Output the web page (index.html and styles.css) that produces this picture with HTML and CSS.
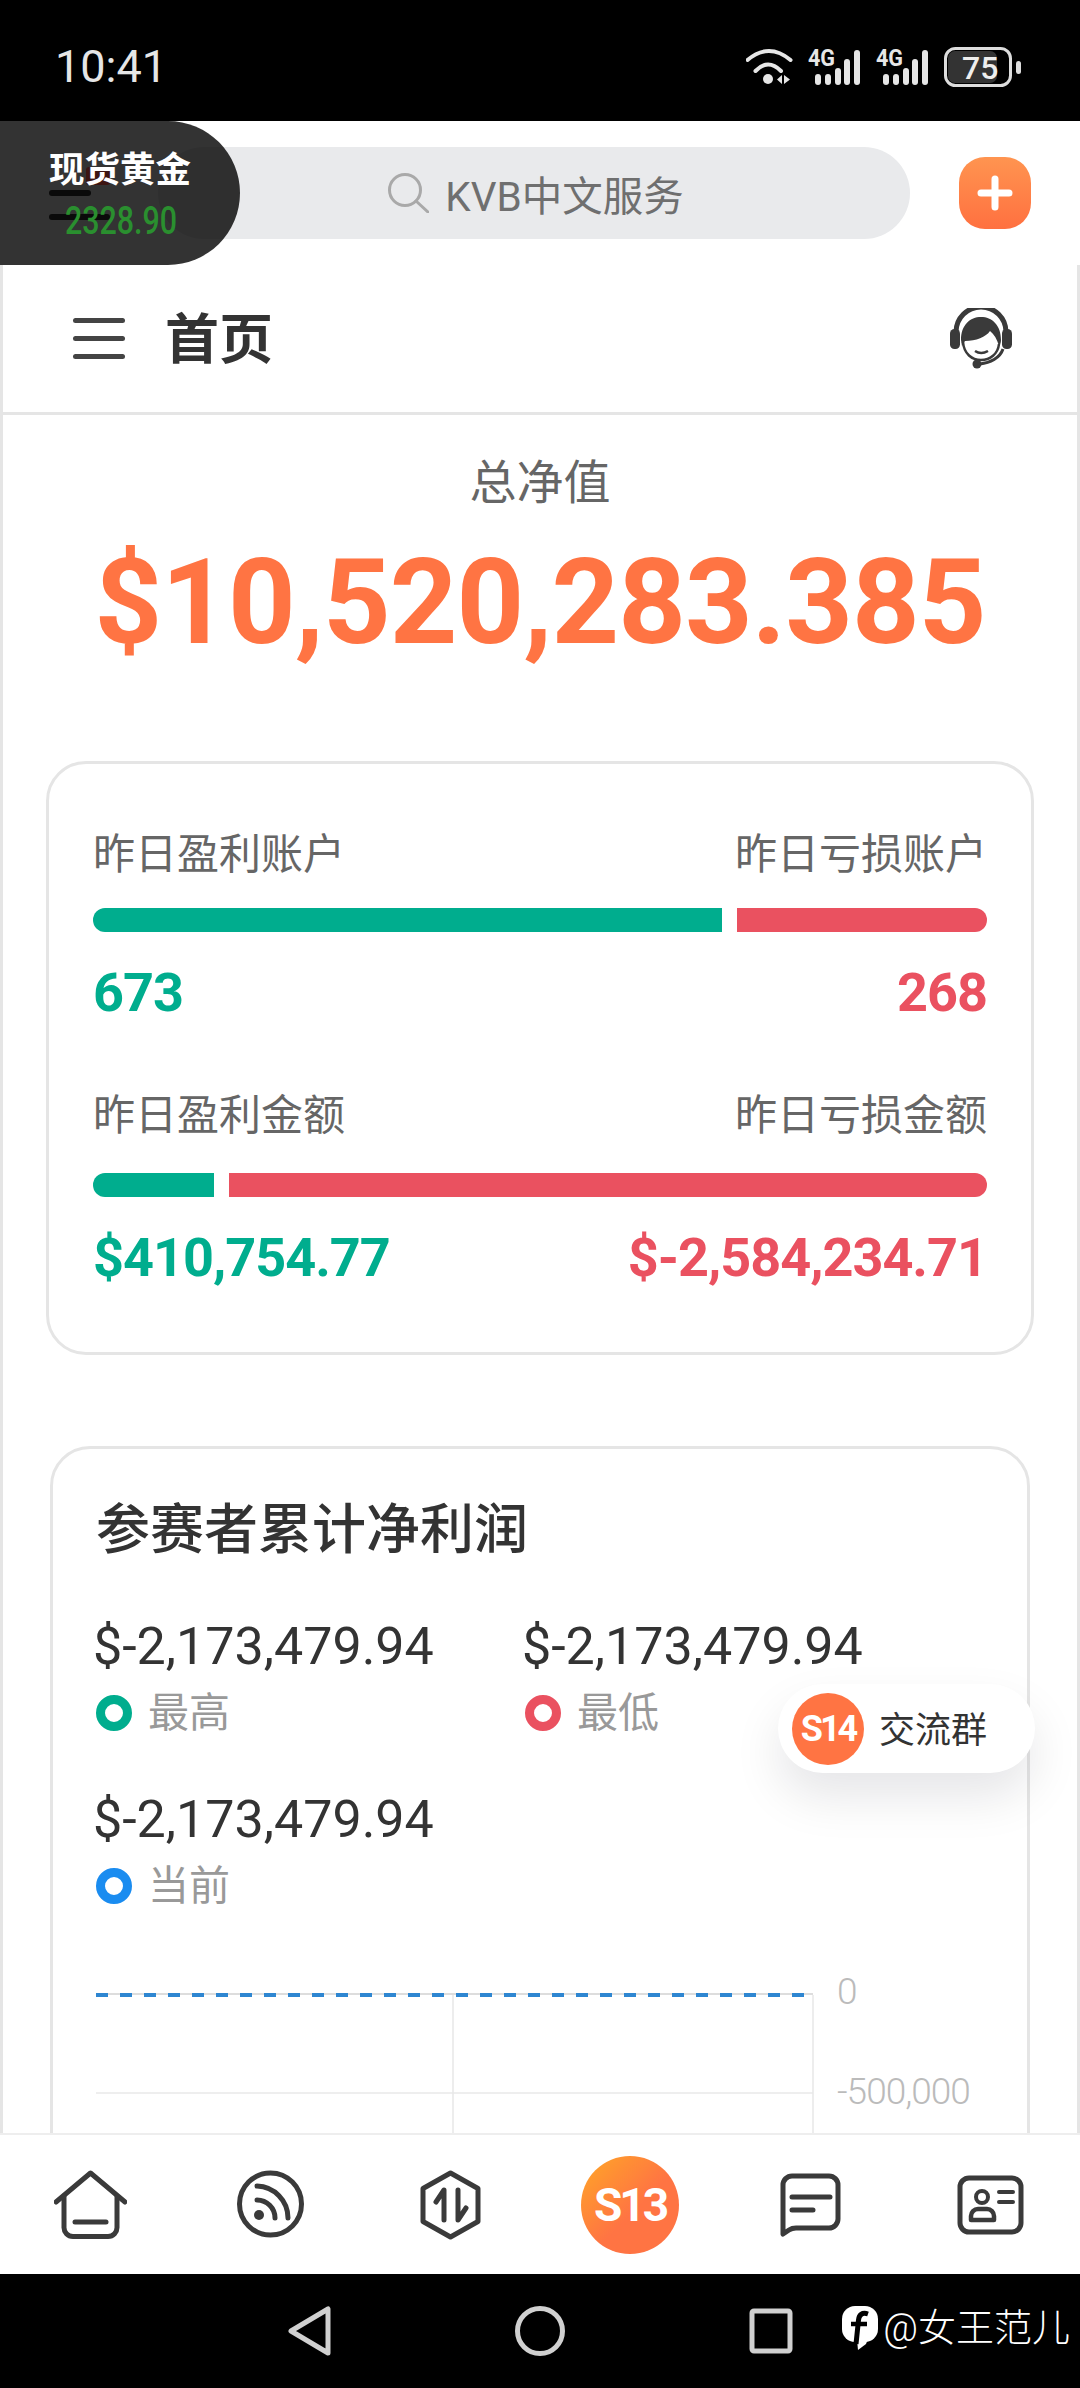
FILE: index.html
```html
<!DOCTYPE html>
<html lang="zh">
<head>
  <meta charset="UTF-8" />
  <meta name="viewport" content="width=device-width, initial-scale=1" />
  <title>首页</title>
  <link rel="stylesheet" href="styles.css">
</head>
<body>
  <div class="screen">
    <div class="status-bar">
      <span class="hora">10:41</span>
      <div class="status-iconos">
        <svg width="47" height="38" viewBox="0 0 47 38" fill="none" stroke="#e6e6e6" stroke-width="4" stroke-linecap="round">
          <path d="M1.5 12Q23-6 44.500 12" />
          <path d="M9.500 23Q22 10 35 23" />
          <circle cx="22" cy="31" r="5" fill="#e6e6e6" stroke="none" />
          <path d="M36 27v9l-5-4.500zM38 27v9l6-4.500z" fill="#e6e6e6" stroke="none" />
        </svg>
        <svg class="senal" width="53" height="52" viewBox="0 -6 53 52">
          <text x="0" y="19" class="senal-texto" textLength="27" lengthAdjust="spacingAndGlyphs">4G</text>
          <rect x="7" y="27" width="6" height="11" rx="3" />
          <rect x="17" y="27" width="6" height="11" rx="3" />
          <rect x="27" y="21" width="6" height="17" rx="3" />
          <rect x="36" y="12" width="6" height="26" rx="3" />
          <rect x="46" y="3" width="6" height="35" rx="3" />
        </svg>
        <svg class="senal" width="53" height="52" viewBox="0 -6 53 52">
          <text x="0" y="19" class="senal-texto" textLength="27" lengthAdjust="spacingAndGlyphs">4G</text>
          <rect x="7" y="27" width="6" height="11" rx="3" />
          <rect x="17" y="27" width="6" height="11" rx="3" />
          <rect x="27" y="21" width="6" height="17" rx="3" />
          <rect x="36" y="12" width="6" height="26" rx="3" />
          <rect x="46" y="3" width="6" height="35" rx="3" />
        </svg>
        <svg width="77" height="40" viewBox="0 0 77 40">
          <rect x="4" y="4" width="49" height="32" rx="7" fill="#333" />
          <rect x="1.500" y="1.500" width="65" height="37" rx="10" fill="none" stroke="#ddd" stroke-width="3" />
          <text x="18" y="32" class="bateria-texto">75</text>
          <rect x="72" y="14" width="5" height="13" rx="2.500" fill="#ddd" />
        </svg>
      </div>
    </div>

    <div class="buscador-fila">
      <div class="buscador">
        <svg width="41" height="40" viewBox="0 0 41 40" fill="none" stroke="#a9a9a9" stroke-width="3" stroke-linecap="round">
          <circle cx="17" cy="17" r="15.500" />
          <path d="M28 28l12 11" />
        </svg>
        <span>KVB中文服务</span>
      </div>
      <div class="boton-mas">
        <svg width="36" height="36" viewBox="0 0 36 36" stroke="#fff" stroke-width="7" stroke-linecap="round">
          <path d="M18 4v28M4 18h28" />
        </svg>
      </div>
    </div>

    <!-- Precio flotante -->
    <div class="precio-flotante">
      <i class="mancha mancha-roja"></i>
      <i class="mancha mancha-1"></i>
      <i class="mancha mancha-2"></i>
      <span class="precio-nombre">现货黄金</span>
      <span class="precio-valor">2328.90</span>
    </div>

    <div class="cabecera">
      <div class="menu"><span></span><span></span><span></span></div>
      <h1>首页</h1>
      <svg class="soporte" width="62" height="62" viewBox="0 0 62 62" fill="#3a3a3a">
        <path d="M6 24A25 25 0 0 1 56 24" fill="none" stroke="#3a3a3a" stroke-width="5" />
        <rect x="0" y="21" width="10" height="20" rx="4.500" />
        <rect x="52" y="21" width="10" height="20" rx="4.500" />
        <path d="M11 32C11 17 20 9 31 9S51 17 51 32C51 35 50 37 49 38 47 31 44 26 40 23 36 29 26 33 15 33L12 38Z" />
        <path d="M13 34C14 46 22 52 31 52S48 46 49 36" fill="none" stroke="#3a3a3a" stroke-width="2.500" />
        <path d="M25 43Q31 47 38 43" fill="none" stroke="#3a3a3a" stroke-width="2.500" />
        <path d="M53 41C50 50 40 55 30 56" fill="none" stroke="#3a3a3a" stroke-width="3" />
        <circle cx="27" cy="56" r="4.500" />
      </svg>
    </div>

    <div class="contenido">
      <div class="saldo">
        <div class="saldo-titulo">总净值</div>
        <div class="saldo-monto">$10,520,283.385</div>
      </div>

      <div class="tarjeta tarjeta-ayer">
        <div class="fila">
          <span>昨日盈利账户</span>
          <span>昨日亏损账户</span>
        </div>
        <div class="barra">
          <div class="barra-verde" style="flex: 673"></div>
          <div class="barra-roja" style="flex: 268"></div>
        </div>
        <div class="fila fila-numeros">
          <span class="verde">673</span>
          <span class="rojo">268</span>
        </div>
        <div class="fila fila-segunda">
          <span>昨日盈利金额</span>
          <span>昨日亏损金额</span>
        </div>
        <div class="barra">
          <div class="barra-verde" style="flex: 410755"></div>
          <div class="barra-roja" style="flex: 2584235"></div>
        </div>
        <div class="fila fila-numeros">
          <span class="verde">$410,754.77</span>
          <span class="rojo">$-2,584,234.71</span>
        </div>
      </div>

      <div class="tarjeta tarjeta-neto">
        <h2>参赛者累计净利润</h2>
        <div class="datos">
          <div class="dato">
            <div class="dato-valor">$-2,173,479.94</div>
            <div class="dato-nombre"><i class="aro aro-verde"></i>最高</div>
          </div>
          <div class="dato">
            <div class="dato-valor">$-2,173,479.94</div>
            <div class="dato-nombre"><i class="aro aro-rojo"></i>最低</div>
          </div>
          <div class="dato">
            <div class="dato-valor">$-2,173,479.94</div>
            <div class="dato-nombre"><i class="aro aro-azul"></i>当前</div>
          </div>
        </div>
        <svg class="grafico" width="880" height="320" viewBox="0 0 880 320" fill="none">
          <path d="M0 33H717" stroke="#ddd" stroke-width="2" />
          <path d="M0 34H711" stroke="#2e86d1" stroke-width="4" stroke-dasharray="12 12" />
          <path d="M0 132H717" stroke="#eee" stroke-width="2" />
          <path d="M357 34V320M717 34V320" stroke="#e8e8e8" stroke-width="1.500" />
          <text x="741" y="43" class="grafico-texto">0</text>
          <text x="741" y="143" class="grafico-texto">-500,000</text>
        </svg>
      </div>

      <div class="flotante-grupo">
        <span class="logo-s14">S14</span>
        <span class="flotante-texto">交流群</span>
      </div>
    </div>

    <nav class="nav">
      <svg width="73" height="69" viewBox="0 0 73 69" fill="none" stroke="#3a3a3a" stroke-width="5" stroke-linecap="round" stroke-linejoin="round">
        <path d="M2 32L36.500 3 71 32" />
        <path d="M10 26V57A9 9 0 0 0 19 66.500H54A9 9 0 0 0 63 57V26" />
        <path d="M21 52H52" />
      </svg>
      <svg width="67" height="69" viewBox="0 0 67 69" fill="none" stroke="#3a3a3a" stroke-width="5" stroke-linecap="round">
        <circle cx="33.500" cy="34" r="31" />
        <circle cx="22" cy="45" r="5" fill="#3a3a3a" stroke="none" />
        <path d="M20 30A18 18 0 0 1 38 48" />
        <path d="M20 16A32 32 0 0 1 51 48" />
      </svg>
      <svg width="63" height="70" viewBox="0 0 63 70" fill="none" stroke="#3a3a3a" stroke-width="5" stroke-linecap="round" stroke-linejoin="round">
        <path d="M31.500 3L59 18.500V51.500L31.500 67 4 51.500V18.500Z" />
        <path d="M25 50V20L17 32" />
        <path d="M39 20V50L47 38" />
      </svg>
      <span class="logo-s13">S13</span>
      <svg width="61" height="64" viewBox="0 0 61 64" fill="none" stroke="#3a3a3a" stroke-width="5" stroke-linecap="round" stroke-linejoin="round">
        <path d="M3 61V12A9 9 0 0 1 12 3H49A9 9 0 0 1 58 12V46A9 9 0 0 1 49 55H16Q12 55 9 57Z" />
        <path d="M12 24H50M12 37H33" />
      </svg>
      <svg width="67" height="60" viewBox="0 0 67 60" fill="none" stroke="#3a3a3a" stroke-width="5" stroke-linecap="round" stroke-linejoin="round">
        <rect x="3" y="3" width="61" height="54" rx="9" />
        <circle cx="25" cy="22" r="6" stroke-width="4" />
        <path d="M14 45V41A7 7 0 0 1 21 34H30A7 7 0 0 1 37 41V45Z" stroke-width="4.500" />
        <path d="M42 17H56M42 27H56" stroke-width="4" />
      </svg>
    </nav>

    <div class="sistema">
      <svg width="43" height="50" viewBox="0 0 43 50" fill="none" stroke="#d0d0d0" stroke-width="5" stroke-linejoin="round">
        <path d="M3 25L40 3V47Z" />
      </svg>
      <svg width="50" height="50" viewBox="0 0 50 50" fill="none" stroke="#d0d0d0" stroke-width="5">
        <circle cx="25" cy="25" r="22.500" />
      </svg>
      <svg width="44" height="46" viewBox="0 0 44 46" fill="none" stroke="#d0d0d0" stroke-width="5" stroke-linejoin="round">
        <rect x="3" y="3" width="38" height="40" rx="2" />
      </svg>
      <div class="marca">
        <svg width="36" height="44" viewBox="0 0 36 44">
          <rect x="0" y="0" width="36" height="36" rx="13" fill="#fff" />
          <path d="M15 34L16 44 24 38 26 33Z" fill="#fff" />
          <path d="M26 8C20 6 17 9 16.500 14L14 38" fill="none" stroke="#000" stroke-width="5" />
          <path d="M9 18H25" stroke="#000" stroke-width="4.500" />
        </svg>
        <span>@女王范儿</span>
      </div>
    </div>
  </div>
</body>
</html>
```
FILE: styles.css
```css
* {
  box-sizing: border-box;
}

body {
  margin: 0;
  padding: 0;
  background: #fff;
  color: #333;
  font-family: Roboto, "Noto Sans CJK SC", sans-serif;
}

.screen {
  position: relative;
  width: 1080px;
  height: 2388px;
  overflow: hidden;
  display: flex;
  flex-direction: column;
}

/* barra de estado */
.status-bar {
  flex: none;
  height: 121px;
  background: #000;
  display: flex;
  align-items: center;
  padding: 12px 59px 0 55px;
  color: #e6e6e6;
}

.hora {
  font-size: 45px;
  line-height: 1;
}

.status-iconos {
  margin-left: auto;
  display: flex;
  align-items: center;
  gap: 15px;
}

.senal {
  fill: #e6e6e6;
}

.senal-texto {
  font-size: 23px;
  font-weight: 700;
}

.bateria-texto {
  fill: #eee;
  font-size: 32px;
  font-weight: 500;
}

/* buscador */
.buscador-fila {
  flex: none;
  height: 144px;
  display: flex;
  align-items: center;
  padding: 0 49px 0 158px;
}

.buscador {
  width: 752px;
  height: 92px;
  padding-left: 4px;
  border-radius: 46px;
  background: #e9eaec;
  display: flex;
  align-items: center;
  justify-content: center;
  gap: 16px;
  font-size: 40.500px;
  color: #6f6f6f;
}

.boton-mas {
  width: 72px;
  height: 72px;
  margin-left: 49px;
  border-radius: 26px;
  background: linear-gradient(180deg, #ff9450, #ff7040);
  display: flex;
  align-items: center;
  justify-content: center;
}

.precio-flotante {
  position: absolute;
  top: 121px;
  left: 0;
  width: 240px;
  height: 144px;
  padding: 26px 0 0 49px;
  border-radius: 0 72px 72px 0;
  background: rgba(0, 0, 0, 0.8);
  display: flex;
  flex-direction: column;
}

.precio-nombre {
  position: relative;
  font-size: 35.500px;
  line-height: 46px;
  font-weight: 700;
  color: #fff;
}

.precio-valor {
  position: relative;
  align-self: flex-start;
  margin: 6px 0 0 16px;
  font-size: 38px;
  line-height: 44px;
  font-weight: 500;
  color: #2a8f2f;
  transform: scaleX(0.8);
  transform-origin: left center;
}

.mancha {
  position: absolute;
  left: 49px;
  height: 6px;
  border-radius: 3px;
  background: #0a0a0a;
}

.mancha-1 {
  top: 69px;
  width: 42px;
}

.mancha-2 {
  top: 93px;
  width: 61px;
}

.mancha-roja {
  top: 46px;
  left: 86px;
  width: 24px;
  height: 18px;
  background: #3d1512;
}

/* cabecera */
.cabecera {
  flex: none;
  height: 150px;
  display: flex;
  align-items: center;
  padding: 0 65px 0 70px;
  border: 3px solid #e5e5e5;
  border-top: none;
}

.menu {
  display: flex;
  flex-direction: column;
  gap: 13px;
}

.menu span {
  width: 52px;
  height: 5px;
  border-radius: 2.500px;
  background: #444;
}

.cabecera h1 {
  margin: 0 0 6px 40px;
  font-size: 54px;
  font-weight: 700;
  color: #333;
}

.soporte {
  margin-left: auto;
}

/* contenido */
.contenido {
  position: relative;
  flex: 1;
  min-height: 0;
  overflow: hidden;
  border-left: 3px solid #e5e5e5;
  border-right: 3px solid #e5e5e5;
}

.saldo {
  padding-top: 38px;
  text-align: center;
}

.saldo-titulo {
  font-size: 47px;
  line-height: 60px;
  color: #666;
}

.saldo-monto {
  margin-top: 25px;
  margin-bottom: -3px;
  font-size: 118px;
  line-height: 130px;
  font-weight: 700;
  letter-spacing: -0.900px;
  color: #ff7443;
}

.tarjeta {
  border: 3px solid #e5e5e5;
  border-radius: 40px;
  background: #fff;
}

.tarjeta-ayer {
  margin: 96px 43px 0;
  padding: 63px 44px 62px;
}

.fila {
  display: flex;
  justify-content: space-between;
  font-size: 42px;
  line-height: 56px;
  color: #666;
}

.fila-segunda {
  margin-top: 63px;
}

.fila-numeros {
  margin-top: 29px;
  font-size: 54px;
  line-height: 64px;
  font-weight: 700;
  letter-spacing: -1px;
}

.verde {
  color: #00ad8e;
}

.rojo {
  color: #ea5160;
}

.barra {
  margin-top: 25px;
  height: 24px;
  display: flex;
  gap: 15px;
}

.fila-segunda + .barra {
  margin-top: 29px;
}

.barra-verde {
  background: #00ad8e;
  border-radius: 12px 0 0 12px;
}

.barra-roja {
  background: #ea5160;
  border-radius: 0 12px 12px 0;
}

.tarjeta-neto {
  height: 900px;
  margin: 91px 47px 0;
  padding: 47px 0 0 43px;
}

.tarjeta-neto h2 {
  margin: 0;
  font-size: 54px;
  line-height: 70px;
  font-weight: 500;
  color: #333;
}

.datos {
  margin-top: 51px;
  display: grid;
  grid-template-columns: 429px 427px;
  row-gap: 52px;
}

.dato-valor {
  margin-left: -3px;
  font-size: 52px;
  line-height: 60px;
  color: #333;
}

.dato-nombre {
  margin-top: 11px;
  display: flex;
  align-items: center;
  gap: 16px;
  font-size: 41px;
  line-height: 50px;
  color: #999;
}

.aro {
  width: 36px;
  height: 36px;
  border: 9px solid;
  border-radius: 50%;
}

.aro-verde {
  border-color: #00ad8e;
}

.aro-rojo {
  border-color: #ea5160;
}

.aro-azul {
  border-color: #1a8cf0;
}

.grafico {
  display: block;
  margin-top: 50px;
}

.grafico-texto {
  fill: #bbb;
  font-size: 37px;
  font-weight: 300;
  letter-spacing: -1px;
}

.flotante-grupo {
  position: absolute;
  top: 1269px;
  left: 775px;
  width: 257px;
  height: 89px;
  padding-left: 14px;
  border-radius: 45px;
  background: #fff;
  box-shadow: 0 24px 48px rgba(0, 0, 30, 0.1);
  display: flex;
  align-items: center;
  gap: 15px;
  font-size: 36px;
  color: #333;
}

.flotante-texto {
  margin-bottom: 4px;
}

.logo-s14 {
  width: 72px;
  height: 72px;
  border-radius: 50%;
  background: #ff7443;
  color: #fff;
  display: flex;
  align-items: center;
  justify-content: center;
  font-size: 36px;
  font-weight: 700;
  letter-spacing: -3px;
}

/* navegacion inferior */
.nav {
  flex: none;
  height: 141px;
  background: #fff;
  border-top: 2px solid #eee;
  display: grid;
  grid-template-columns: repeat(6, 180px);
  align-items: center;
  justify-items: center;
}

.logo-s13 {
  width: 98px;
  height: 98px;
  border-radius: 50%;
  background: linear-gradient(135deg, #ffa726, #ff7443 55%);
  color: #fff;
  display: flex;
  align-items: center;
  justify-content: center;
  font-size: 46px;
  font-weight: 700;
  letter-spacing: -3px;
}

/* barra del sistema */
.sistema {
  position: relative;
  flex: none;
  height: 114px;
  background: #000;
  display: flex;
  align-items: center;
  justify-content: center;
  gap: 184px;
}

.marca {
  position: absolute;
  top: 30px;
  right: 10px;
  display: flex;
  align-items: center;
  gap: 5px;
  font-size: 38px;
  line-height: 48px;
  font-weight: 300;
  color: #fff;
}
```
